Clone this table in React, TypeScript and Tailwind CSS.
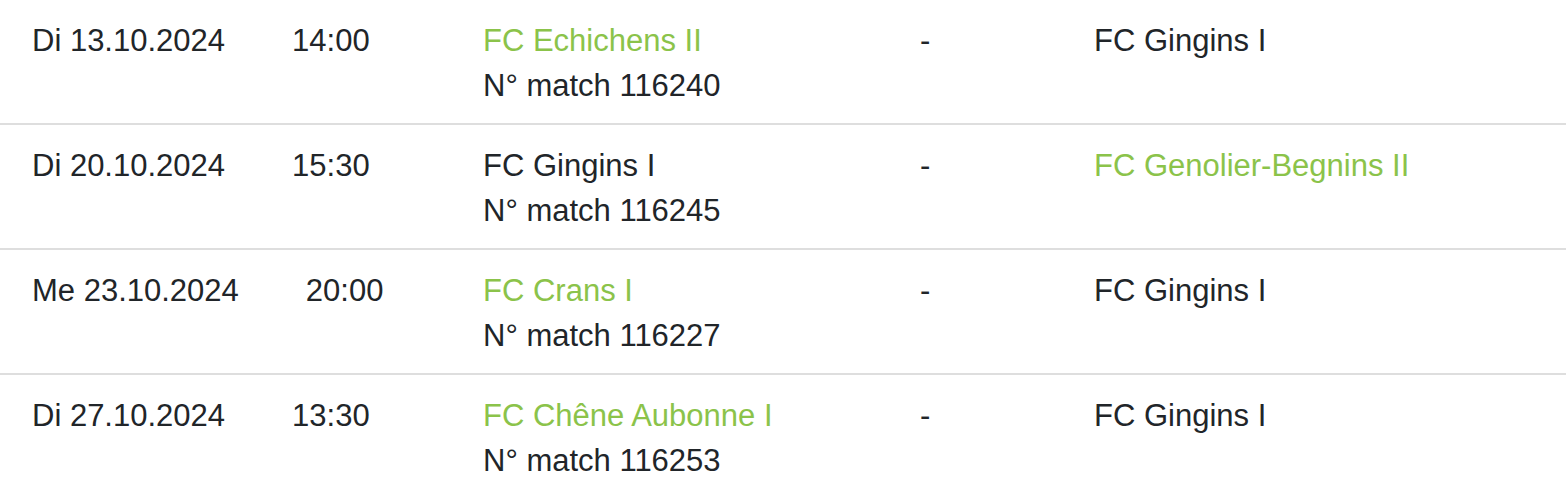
import React from "react";

type Row = {
  date: string;
  time: string;
  home: string;
  homeGreen: boolean;
  away: string;
  awayGreen: boolean;
  num: string;
};

const rows: Row[] = [
  { date: "Di 13.10.2024", time: "14:00", home: "FC Echichens II", homeGreen: true, away: "FC Gingins I", awayGreen: false, num: "116240" },
  { date: "Di 20.10.2024", time: "15:30", home: "FC Gingins I", homeGreen: false, away: "FC Genolier-Begnins II", awayGreen: true, num: "116245" },
  { date: "Me 23.10.2024", time: "20:00", home: "FC Crans I", homeGreen: true, away: "FC Gingins I", awayGreen: false, num: "116227" },
  { date: "Di 27.10.2024", time: "13:30", home: "FC Chêne Aubonne I", homeGreen: true, away: "FC Gingins I", awayGreen: false, num: "116253" },
];

export default function App() {
  return (
    <div
      className="w-[1566px] h-[498px] overflow-hidden bg-white text-[#212529] text-[31px] leading-[45px]"
      style={{ fontFamily: '"Liberation Sans", Arial, sans-serif' }}
    >
      {rows.map((r, i) => (
        <div key={i} className="flex pl-[32px] pt-[18px] pb-[15px] border-b-2 border-[#dedede]">
          <div className="w-[451px] flex">
            <span>{r.date}</span>
            <span className="ml-[67px]">{r.time}</span>
          </div>
          <div className="w-[436px] flex flex-col">
            <span className={r.homeGreen ? "text-[#8bc34a]" : ""}>{r.home}</span>
            <span>N° match {r.num}</span>
          </div>
          <div className="w-[175px] pl-[1px]">-</div>
          <div className="flex-1">
            <span className={r.awayGreen ? "text-[#8bc34a]" : ""}>{r.away}</span>
          </div>
        </div>
      ))}
    </div>
  );
}
